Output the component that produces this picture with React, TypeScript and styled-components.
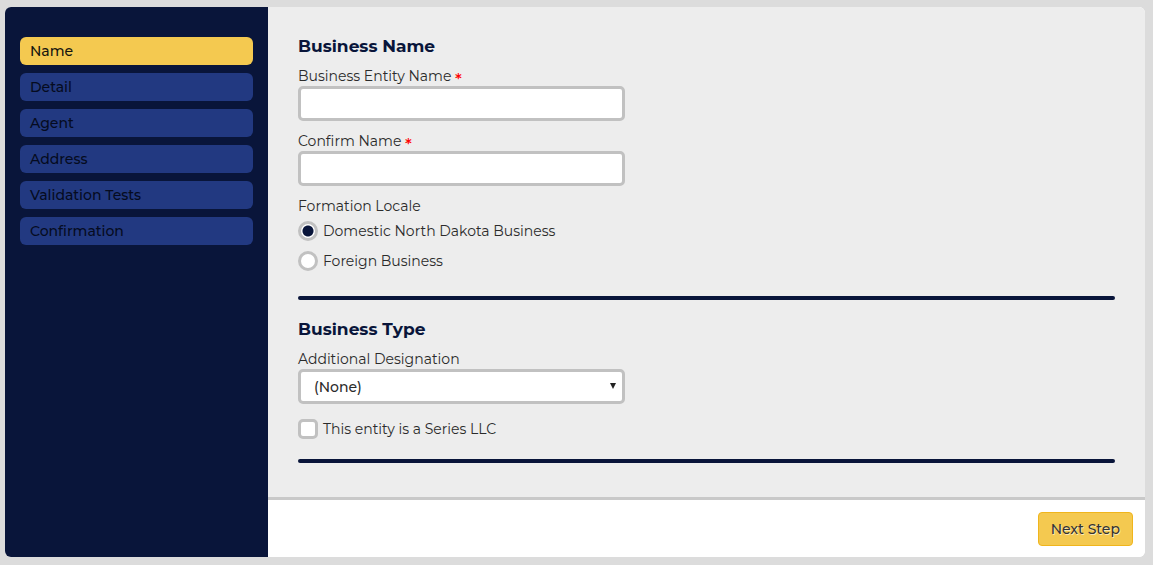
import React from "react";
import styled, { createGlobalStyle } from "styled-components";

const navy = "#09153a";
const gold = "#f4c950";
const line = "#c1c1c1";

const GlobalStyle = createGlobalStyle`
  *, *::before, *::after { box-sizing: border-box; }
  body {
    margin: 0;
    background: #dcdcdc;
    color: #2b2b2b;
    font: 14px/20px Montserrat, Inter, "Liberation Sans", sans-serif;
  }
`;

const Page = styled.div`
  padding: 7px 8px 8px 5px;
`;

const Card = styled.div`
  display: flex;
  overflow: hidden;
  border-radius: 6px;
  background: #fff;
`;

const Sidebar = styled.nav`
  flex: 0 0 263px;
  display: flex;
  flex-direction: column;
  gap: 8px;
  padding: 30px 15px;
  background: ${navy};
`;

const Step = styled.a<{ $active?: boolean }>`
  padding: 4px 10px;
  border-radius: 6px;
  background: ${(p) => (p.$active ? gold : "#223981")};
  color: ${(p) => (p.$active ? "#16150f" : "#050b20")};
  font-weight: 500;
  text-decoration: none;
`;

const Main = styled.form`
  flex: 1;
  min-width: 0;
`;

const Body = styled.div`
  padding: 30px 30px 34px;
  background: #ededed;
`;

const Heading = styled.h2`
  margin: 0 0 11px;
  color: ${navy};
  font-size: 17px;
  line-height: 18px;
  font-weight: 700;
`;

const Field = styled.div`
  width: 40%;
  min-width: 240px;
  margin-bottom: 10px;
`;

const Label = styled.label`
  display: block;
`;

const Required = styled.span`
  color: #f00;
  font-size: 17px;
  font-weight: 500;
  line-height: 0;
  vertical-align: -4px;
`;

const TextInput = styled.input`
  display: block;
  width: 100%;
  height: 35px;
  padding: 0 13px;
  border: 3px solid ${line};
  border-radius: 5px;
  background: #fff;
  color: inherit;
  font: inherit;
`;

const SelectBox = styled.div`
  position: relative;
`;

const Select = styled.select`
  appearance: none;
  display: block;
  width: 100%;
  height: 35px;
  padding: 0 24px 0 13px;
  border: 3px solid ${line};
  border-radius: 5px;
  background: #fff;
  color: inherit;
  font: inherit;
  font-weight: 500;
`;

const Arrow = styled.svg`
  position: absolute;
  top: 14px;
  right: 9px;
  width: 6px;
  height: 6px;
  fill: #222;
  pointer-events: none;
`;

const Options = styled.fieldset`
  margin: 0;
  padding: 0;
  border: 0;
`;

const Legend = styled.legend`
  padding: 0;
`;

const Choice = styled.label`
  display: flex;
  align-items: center;
  gap: 5px;
  width: fit-content;
  padding: 5px 0;
`;

const Tick = styled.input`
  appearance: none;
  flex: none;
  width: 20px;
  height: 20px;
  margin: 0;
  border: 3px solid ${line};
  border-radius: ${(p) => (p.type === "radio" ? "50%" : "5px")};
  background: #fff;

  &:checked {
    background: radial-gradient(circle, ${navy} 5px, #fff 6px);
  }
`;

const Rule = styled.hr<{ $last?: boolean }>`
  height: 4px;
  margin: ${(p) => (p.$last ? "15px 0 0" : "20px 0")};
  border: 0;
  border-radius: 2px;
  background: ${navy};
`;

const Footer = styled.div`
  display: flex;
  justify-content: flex-end;
  padding: 12px 12px 11px;
  border-top: 3px solid #c9c9c9;
  background: #fff;
`;

const NextButton = styled.button`
  height: 34px;
  padding: 0 12px;
  border: 1px solid #f0b51c;
  border-radius: 4px;
  background: ${gold};
  color: #333;
  font: inherit;
  font-weight: 500;
  text-shadow: 1px 1px 0 rgba(255, 255, 255, 0.6);
`;

const steps = ["Name", "Detail", "Agent", "Address", "Validation Tests", "Confirmation"];

export default function App() {
  return (
    <Page>
      <GlobalStyle />
      <Card>
        <Sidebar aria-label="Steps">
          {steps.map((step, i) => (
            <Step key={step} href="#" $active={i === 0} aria-current={i === 0 ? "step" : undefined}>
              {step}
            </Step>
          ))}
        </Sidebar>
        <Main onSubmit={(e) => e.preventDefault()}>
          <Body>
            <Heading>Business Name</Heading>
            <Field>
              <Label htmlFor="entity-name">
                Business Entity Name <Required>*</Required>
              </Label>
              <TextInput id="entity-name" type="text" />
            </Field>
            <Field>
              <Label htmlFor="confirm-name">
                Confirm Name <Required>*</Required>
              </Label>
              <TextInput id="confirm-name" type="text" />
            </Field>
            <Options>
              <Legend>Formation Locale</Legend>
              <Choice>
                <Tick type="radio" name="locale" value="domestic" defaultChecked />
                Domestic North Dakota Business
              </Choice>
              <Choice>
                <Tick type="radio" name="locale" value="foreign" />
                Foreign Business
              </Choice>
            </Options>
            <Rule />
            <Heading>Business Type</Heading>
            <Field>
              <Label htmlFor="designation">Additional Designation</Label>
              <SelectBox>
                <Select id="designation">
                  <option>(None)</option>
                </Select>
                <Arrow viewBox="0 0 6 6" aria-hidden="true">
                  <path d="M0 0h6L3 6z" />
                </Arrow>
              </SelectBox>
            </Field>
            <Choice>
              <Tick type="checkbox" name="series" />
              This entity is a Series LLC
            </Choice>
            <Rule $last />
          </Body>
          <Footer>
            <NextButton type="submit">Next Step</NextButton>
          </Footer>
        </Main>
      </Card>
    </Page>
  );
}
